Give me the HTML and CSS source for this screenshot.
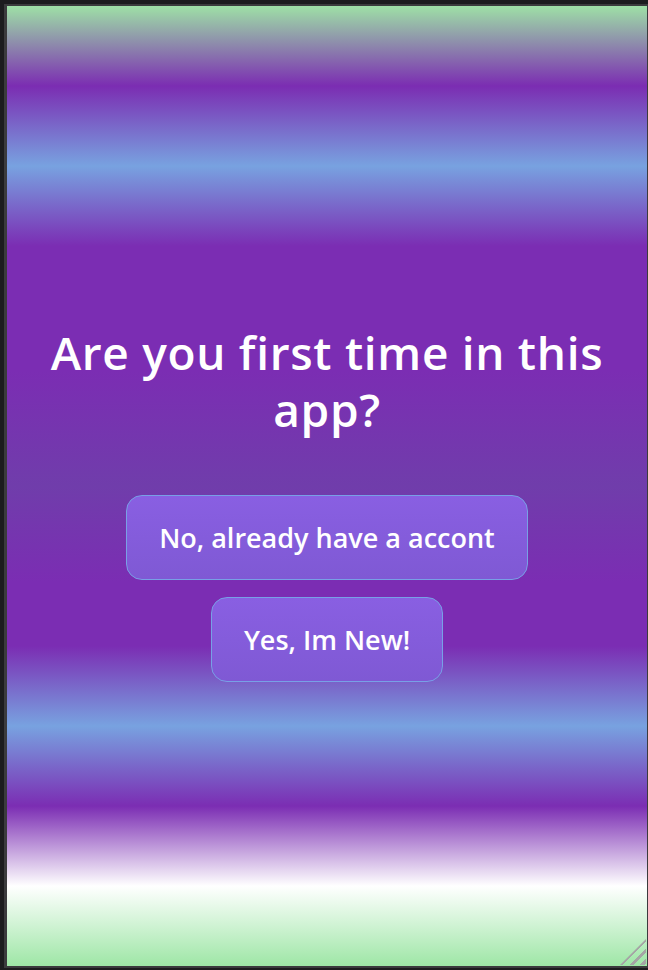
FILE: index.html
```html
<!DOCTYPE html>
<html lang="en">
<head>
<meta charset="utf-8">
<title>Welcome</title>
<link rel="stylesheet" href="styles.css">
</head>
<body>
<div class="frame">
  <main class="screen">
    <h1 class="title">Are you first time in this app?</h1>
    <div class="actions">
      <button class="btn" type="button">No, already have a accont</button>
      <button class="btn" type="button">Yes, Im New!</button>
    </div>
    <span class="grip" aria-hidden="true"></span>
  </main>
</div>
</body>
</html>
```
FILE: styles.css
```css
html, body {
  margin: 0;
  padding: 0;
  height: 100%;
  background: #1c1c1e;
}

body {
  padding: 4px 0 0 4px;
  box-sizing: border-box;
}

.frame {
  width: 640px;
  height: 960px;
  border: 2px solid #3b3b3d;
  border-left-width: 3px;
}

.screen {
  position: relative;
  width: 640px;
  height: 960px;
  box-sizing: border-box;
  padding-top: 318px;
  display: flex;
  flex-direction: column;
  align-items: center;
  font-family: "Open Sans", "Noto Sans", sans-serif;
  background: linear-gradient(
    to bottom,
    #9ee0a6 0%,
    #7b2db2 8.33%,
    #78a2e0 16.67%,
    #7b2db3 25%,
    #7b2db3 38%,
    #703dab 50%,
    #7b2db3 60%,
    #7b2db3 66.67%,
    #78a2e0 75%,
    #7b2db3 83.33%,
    #ffffff 91.67%,
    #9ee6a6 100%
  );
}

.title {
  margin: 0 0 57px;
  padding: 0 30px;
  color: #ffffff;
  font-size: 46px;
  font-weight: 600;
  line-height: 57px;
  letter-spacing: 0.7px;
  text-align: center;
}

.actions {
  display: flex;
  flex-direction: column;
  align-items: center;
  gap: 17px;
}

.btn {
  height: 85px;
  padding: 0 32px;
  border: 1px solid #78a0e6;
  border-radius: 16px;
  background: linear-gradient(to bottom, #895fe2, #7f59d4);
  color: #ffffff;
  font-family: "Open Sans", "Noto Sans", sans-serif;
  font-size: 27px;
  font-weight: 600;
  cursor: pointer;
}

.grip {
  position: absolute;
  right: 1px;
  bottom: 1px;
  width: 26px;
  height: 26px;
  background: repeating-linear-gradient(
    135deg,
    transparent 0 2.5px,
    #a5a5a5 2.5px 5.5px,
    transparent 5.5px 7.5px
  );
  clip-path: polygon(100% 0, 100% 100%, 0 100%);
}
```
